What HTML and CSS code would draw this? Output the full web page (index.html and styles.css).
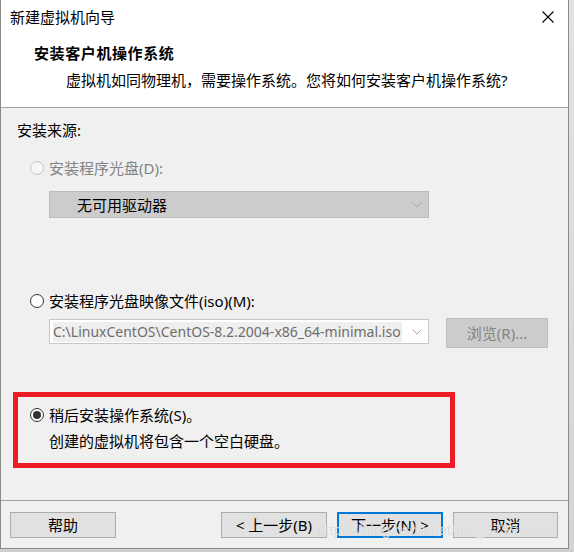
FILE: index.html
```html
<!DOCTYPE html>
<html lang="zh-CN">
<head>
<meta charset="utf-8">
<title>新建虚拟机向导</title>
<link rel="stylesheet" href="styles.css">
</head>
<body>
<div class="screen">
  <div class="window">
    <div class="head">
      <div class="titlebar">
        <span class="title">新建虚拟机向导</span>
        <svg class="close" width="12" height="12" viewBox="0 0 12 12"><path d="M0.5 0.5 L11.5 11.5 M11.5 0.5 L0.5 11.5" stroke="#000" stroke-width="1.1" fill="none"/></svg>
      </div>
      <div class="hdr-title">安装客户机操作系统</div>
      <div class="hdr-sub">虚拟机如同物理机，需要操作系统。您将如何安装客户机操作系统?</div>
    </div>
    <div class="content">
      <div class="label">安装来源:</div>
      <div class="radio-row disabled">
        <span class="radio"></span><span>安装程序光盘(D):</span>
      </div>
      <div class="select disabled-select">
        <span>无可用驱动器</span>
        <svg class="chev" width="10" height="6" viewBox="0 0 10 6"><path d="M0.5 0.5 L5 5 L9.5 0.5" stroke="#a8a8a8" fill="none"/></svg>
      </div>
      <div class="radio-row">
        <span class="radio"></span><span>安装程序光盘映像文件(iso)(M):</span>
      </div>
      <div class="iso-row">
        <div class="combo">
          <span class="combo-text">C:\LinuxCentOS\CentOS-8.2.2004-x86_64-minimal.iso</span>
          <svg class="chev" width="10" height="6" viewBox="0 0 10 6"><path d="M0.5 0.5 L5 5 L9.5 0.5" stroke="#a8a8a8" fill="none"/></svg>
        </div>
        <div class="btn btn-disabled browse">浏览(R)...</div>
      </div>
      <div class="later-box">
        <div class="radio-row">
          <span class="radio checked"></span><span>稍后安装操作系统(S)。</span>
        </div>
        <div class="desc">创建的虚拟机将包含一个空白硬盘。</div>
      </div>
    </div>
    <div class="footer">
      <div class="btn help">帮助</div>
      <div class="right-btns">
        <div class="btn">&lt; 上一步(B)</div>
        <div class="btn primary">下一步(N) &gt;</div>
        <div class="btn cancel">取消</div>
      </div>
    </div>
  </div>
  <div class="side"></div>
  <div class="watermark">https://blog.csdn.net/m0_37595203</div>
</div>
</body>
</html>
```
FILE: styles.css
```css
* { box-sizing: border-box; }
html, body {
  margin: 0;
  padding: 0;
  background: #cfcfcf;
}
body {
  font-family: "Noto Sans", "Noto Sans CJK SC", sans-serif;
  font-size: 15px;
  color: #000;
}
.screen {
  position: relative;
  width: 574px;
  height: 552px;
  display: flex;
  align-items: flex-start;
  overflow: hidden;
}
.window {
  width: 569px;
  height: 549px;
  border-left: 1px solid #8a8a8a;
  border-right: 1px solid #8a8a8a;
  border-bottom: 1px solid #8a8a8a;
  background: #f0f0f0;
  display: flex;
  flex-direction: column;
  flex-shrink: 0;
}
.side {
  flex: 1;
  height: 549px;
  background: linear-gradient(#e2e2e2, #d4d4d4);
}
.head {
  background: #fff;
  height: 108px;
  border-bottom: 1px solid #a0a0a0;
}
.titlebar {
  height: 34px;
  display: flex;
  align-items: center;
  justify-content: space-between;
  padding-left: 9px;
  padding-right: 14px;
}
.title { line-height: 20px; }
.close { display: block; }
.hdr-title {
  margin-top: 9px;
  padding-left: 33px;
  line-height: 20px;
  font-weight: bold;
  letter-spacing: 0.6px;
}
.hdr-sub {
  margin-top: 7px;
  padding-left: 65px;
  line-height: 20px;
}
.content {
  flex: 1;
  padding-top: 12px;
}
.label {
  margin-left: 16px;
  line-height: 20px;
}
.radio-row {
  display: flex;
  align-items: center;
  height: 20px;
  line-height: 20px;
  margin-left: 29px;
}
.content > .radio-row:nth-of-type(2) { margin-top: 18px; }
.radio {
  width: 14px;
  height: 14px;
  border: 1px solid #333;
  border-radius: 50%;
  background: #fff;
  margin-right: 5px;
  display: flex;
  align-items: center;
  justify-content: center;
}
.radio.checked::after {
  content: "";
  width: 8px;
  height: 8px;
  border-radius: 50%;
  background: #333;
}
.disabled { color: #838383; }
.disabled .radio { border-color: #c4c4c4; background: #f7f7f7; }
.select {
  margin-top: 13px;
  margin-left: 48px;
  width: 380px;
  height: 27px;
  display: flex;
  align-items: center;
  justify-content: space-between;
  padding-left: 27px;
  padding-right: 6px;
}
.disabled-select {
  background: #cccccc;
  border: 1px solid #bcbcbc;
}
.content > .radio-row:nth-of-type(4) { margin-top: 73px; }
.iso-row {
  margin-top: 7px;
  margin-left: 48px;
  display: flex;
  align-items: flex-start;
  gap: 17px;
}
.combo {
  margin-top: 1px;
  width: 380px;
  height: 25px;
  background: #fff;
  border: 1px solid #c6c6c6;
  display: flex;
  align-items: center;
  justify-content: space-between;
  padding-left: 3px;
  padding-right: 6px;
}
.combo-text {
  background: #efefef;
  color: #6d6d6d;
  line-height: 20px;
  font-size: 14px;
  padding-right: 1px;
  white-space: nowrap;
}
.btn {
  height: 26px;
  display: flex;
  align-items: center;
  justify-content: center;
  background: #e1e1e1;
  border: 1px solid #adadad;
  line-height: 20px;
  white-space: nowrap;
}
.btn-disabled {
  background: #cccccc;
  border-color: #bfbfbf;
  color: #838383;
}
.browse {
  width: 102px;
  height: 30px;
}
.later-box {
  margin-top: 44px;
  margin-left: 12px;
  width: 442px;
  height: 76px;
  border: 5px solid #ed1c24;
  padding-top: 8px;
}
.later-box .radio-row { margin-left: 12px; }
.desc {
  margin-top: 6px;
  margin-left: 31px;
  line-height: 20px;
}
.footer {
  border-top: 1px solid #a0a0a0;
  height: 48px;
  padding: 11px 10px 0 9px;
  display: flex;
  align-items: flex-start;
  justify-content: space-between;
}
.help { width: 106px; }
.right-btns {
  display: flex;
  gap: 10px;
}
.right-btns .btn { width: 106px; }
.right-btns .cancel { width: 105px; }
.primary {
  border: 2px solid #0078d7;
}
.watermark {
  position: absolute;
  left: 317px;
  top: 521px;
  font-family: "Liberation Sans", Arial, sans-serif;
  font-size: 15px;
  line-height: 18px;
  color: rgba(200, 200, 200, 0.6);
  text-shadow: 0 0 1px rgba(255, 255, 255, 0.8);
  white-space: nowrap;
  pointer-events: none;
}
```
